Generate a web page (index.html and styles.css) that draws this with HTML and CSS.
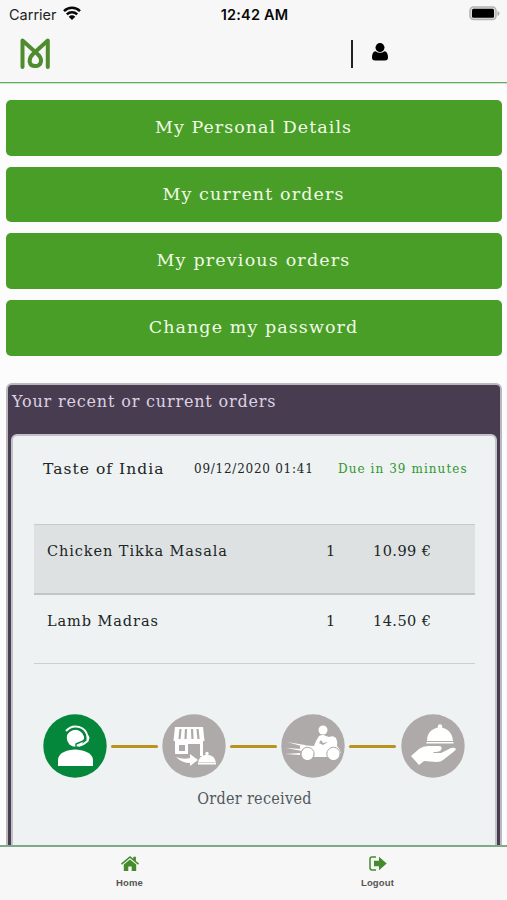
FILE: index.html
```html
<!DOCTYPE html>
<html lang="en">
<head>
<meta charset="utf-8">
<meta name="viewport" content="width=device-width, initial-scale=1">
<title>My account</title>
<link rel="stylesheet" href="styles.css">
</head>
<body>
<div class="app">
  <header class="top">
    <div class="status">
      <div class="carrier"><span>Carrier</span>
        <svg class="wifi" viewBox="0 0 18 14"><path d="M1 5.1a11.5 11.5 0 0 1 16 0M3.8 8.300a7.500 7.500 0 0 1 10.400 0" fill="none" stroke="#080808" stroke-width="2.500"/><path d="M9 14L5.700 10.700a4.700 4.700 0 0 1 6.600 0z" fill="#080808"/></svg>
      </div>
      <div class="clock">12:42 AM</div>
      <svg class="battery" viewBox="0 0 31 15"><rect x="1" y="1" width="26" height="12.5" rx="3.5" fill="#ddd" stroke="#b3b3b3" stroke-width="1.5"/><rect x="3" y="2.8" width="22" height="9" rx="1.5" fill="#000"/><path d="M28.5 5v5q2-.8 2-2.5t-2-2.5z" fill="#aaa"/></svg>
    </div>
    <div class="bar">
      <svg class="logo" viewBox="0 0 30 32"><path d="M2.500 29V2.500L17 15.500C23.500 21 21.500 28 15.200 28S7.500 21 13.500 15.500L27.800 2.500V29" fill="none" stroke="#4e8c2e" stroke-width="4" stroke-linecap="round" stroke-linejoin="round"/></svg>
      <i class="divider"></i>
      <svg class="user" viewBox="0 0 16 18"><circle cx="8" cy="4.600" r="4.500"/><path d="M3.500 8.200q4.500 3.100 9 0C15 8.500 16 11 16 14.500q0 3-3 3H3q-3 0-3-3C0 11 1 8.500 3.500 8.200z"/></svg>
    </div>
  </header>

  <main class="content">
    <nav class="actions">
      <a class="btn b1">My Personal Details</a>
      <a class="btn b2">My current orders</a>
      <a class="btn b3">My previous orders</a>
      <a class="btn b4">Change my password</a>
    </nav>

    <section class="panel">
      <h2><span>Your recent or current orders</span></h2>
      <article class="order">
        <div class="summary">
          <span class="place">Taste of India</span>
          <span class="date">09/12/2020 01:41</span>
          <span class="due">Due in 39 minutes</span>
        </div>
        <div class="items">
          <div class="item shaded"><span class="dish">Chicken Tikka Masala</span><span class="qty">1</span><span class="price">10.99 €</span></div>
          <div class="item"><span class="dish">Lamb Madras</span><span class="qty">1</span><span class="price">14.50 €</span></div>
        </div>
        <div class="steps">
          <svg class="step" viewBox="0 0 64 64"><circle cx="32" cy="32" r="31.700" fill="#04863b"/><g fill="#fff"><path d="M15 52V46C15 39 24 35.500 32 35.500S50 39 50 46v6z"/><circle cx="32.500" cy="24" r="8.700"/></g><path d="M23 17C30 9 43 12 44.500 23v4q-4 4-9 5" fill="none" stroke="#fff" stroke-width="2"/><path d="M44 20q5 4 0 8z" fill="#fff"/><path d="M24 19q9-8 16 0l2.500 5q-1 3-6 4.500L33 30v3" fill="none" stroke="#04863b" stroke-width="1.400"/></svg>
          <i class="link"></i>
          <svg class="step" viewBox="0 0 64 64"><circle cx="32" cy="32" r="31.700" fill="#aeaaa9"/><path d="M13 13h28l1.500 14h-31z" fill="#fff"/><path d="M18.500 15l-1 10M24 15l-.5 10M30 15l.5 10M35.500 15l1 10" stroke="#aeaaa9" stroke-width="2.200"/><path d="M13 27h28v15h-3V30H26v10H13zm4 4v6h6v-6z" fill="#fff" fill-rule="evenodd"/><path d="M14 43q7 3 14 1v-4l8 6-8 6v-3q-8 0-14-6zM36 50.500q0-9 9-10 9 1 9 10z" fill="#fff"/><circle cx="45" cy="39.500" r="1.700" fill="#fff"/><path d="M37 48.500h16" stroke="#ccc" stroke-width=".8"/></svg>
          <i class="link"></i>
          <svg class="step" viewBox="0 0 64 64"><circle cx="32" cy="32" r="31.700" fill="#aeaaa9"/><g fill="#fff"><circle cx="42" cy="16" r="4.500"/><path d="M35 27l3-5q4-2 7 0l3 1q4-2 7 1 2 4 1 8 3 3 4 7l-14 4H33q-1-8-8-8-4 0-6 2V31l14 1z"/><circle cx="26.500" cy="40" r="6.200"/><circle cx="52.500" cy="40" r="6.200"/><path d="M6 28l18 3v2zM5 34l16 1v2zM4 40l15-1v2z"/></g><path d="M40 26l2 3 5-1-5 3-4-2z" fill="#aeaaa9"/><g fill="none" stroke="#aeaaa9"><circle cx="26.500" cy="40" r="6.700"/><circle cx="52.500" cy="40" r="6.700"/></g></svg>
          <i class="link wide"></i>
          <svg class="step" viewBox="0 0 64 64"><circle cx="32" cy="32" r="31.700" fill="#aeaaa9"/><g fill="#fff"><path d="M26 27q0-12 13-14 12 2 13 14zM25.500 28h27v1.500h-27z"/><circle cx="39" cy="12.500" r="2.200"/><path d="M10 42l8-7q4-3 9-3h11q4 0 2 4-1 2-8 2l1 1h7l10-5q4-1 5 1-1 2-4 4l-9 7q-2 2-6 2l-13-1-5 4z"/></g></svg>
        </div>
        <p class="caption"><span>Order received</span></p>
      </article>
    </section>
  </main>

  <footer class="tabs">
    <a class="tab"><svg class="house" viewBox="0 0 18 15"><path d="M0 7.600L9 0l3.300 2.800V.8h2.600V5L18 7.600l-1 1.200L9 2 1 8.800zM2.800 8.500L9 3.400l6.200 5.100V15h-4.500v-4.500H7.300V15H2.800z"/></svg><span>Home</span></a>
    <a class="tab"><svg class="exit" viewBox="0 0 18 15"><path d="M7 1H3Q1 1 1 3v8.500q0 2.500 2 2.500h4" fill="none" stroke="#468a2e" stroke-width="1.500"/><path d="M5 4.700h5V.8l7.700 6.700L10 14.200v-4H5z"/></svg><span>Logout</span></a>
  </footer>
</div>
</body>
</html>
```
FILE: styles.css
```css
* { box-sizing: border-box; }
body { margin: 0; background: #fcfcfc; font-family: "DejaVu Serif", serif; color: #202525; }
svg { display: block; flex: none; }
.app { height: 900px; display: flex; flex-direction: column; overflow: hidden; }
.top { height: 83px; flex: none; background: #f7f7f7; border-bottom: 1px solid #5fae58; box-shadow: 0 1px 0 #cfe4cc; }
.status { height: 28px; padding: 0 7px 0 9px; display: grid; grid-template-columns: 1fr auto 1fr; align-items: center; font-family: Inter, sans-serif; font-size: 14.500px; color: #222; }
.carrier { display: flex; align-items: center; gap: 6px; }
.wifi { width: 18px; height: 14px; margin-top: -2px; }
.clock { font-weight: 600; color: #080808; font-size: 14.5px; letter-spacing: .2px; }
.battery { width: 31px; height: 15px; justify-self: end; margin-top: -1px; }
.bar { height: 54px; display: flex; padding-left: 20px; }
.logo { width: 30px; height: 32px; margin-top: 10px; }
.divider { width: 1.500px; height: 28px; background: #222; margin: 12px 0 0 301px; }
.user { width: 16px; height: 18px; margin: 15px 0 0 19px; }
.content { flex: 1; min-height: 0; overflow: hidden; padding: 17px 5px 0 6px; display: flex; flex-direction: column; }
.actions { display: grid; gap: 11px; }
.btn { height: 55.700px; border-radius: 5px; background: #489e27; color: #f0fae6; display: flex; align-items: center; justify-content: center; font-size: 17.500px; padding: 0 1px 2px 0; white-space: nowrap; }
.b1 { letter-spacing: 1.030px; }
.b2 { letter-spacing: 1.120px; }
.b3 { letter-spacing: 1.170px; }
.b4 { letter-spacing: 1.080px; }
.panel { flex: none; margin-top: 27.500px; border: 2px solid #bdb8c0; border-radius: 6px; background: #483d50; padding: 0 3px; height: 520px; }
h2 { margin: 0; height: 49px; padding: 6px 0 0 1px; font-size: 16px; line-height: 22px; font-weight: 400; letter-spacing: .83px; color: #ddd2e3; white-space: nowrap; }
.order { height: 500px; background: #eef2f3; border: 2px solid #c4c0c8; border-radius: 6px; padding: 0 20px 0 21px; }
.summary { height: 88px; display: flex; padding: 21px 0 0 9px; line-height: 24px; white-space: nowrap; }
.place { width: 151px; font-size: 15.500px; letter-spacing: 1.050px; }
.date { width: 144px; font-size: 12px; letter-spacing: .75px; }
.due { font-size: 12px; letter-spacing: 1.070px; color: #2e982e; }
.items { border-top: 1px solid #c5caca; }
.item { height: 69px; display: grid; grid-template-columns: 279px 47px 1fr; padding: 14px 0 0 13px; border-bottom: 1px solid #cbd0d1; font-size: 14.500px; line-height: 24px; letter-spacing: .92px; white-space: nowrap; }
.price { letter-spacing: .45px; }
.shaded { height: 70px; background: #dde1e2; border-bottom: 2px solid #c0c5c6; }
.steps { display: flex; align-items: center; padding-left: 9px; margin-top: 50px; }
.step { width: 64px; height: 64px; }
.link { width: 47px; height: 3px; border-radius: 2px; background: #ba9220; margin: 0 4px; }
.wide { margin-right: 5px; }
.caption { margin: 9px 0 0; font-family: "DejaVu Serif Condensed", "DejaVu Serif", serif; font-size: 16px; letter-spacing: .3px; line-height: 24px; text-align: center; color: #53585b; }
.tabs { height: 55px; flex: none; border-top: 2px solid #80a989; background: #f7f7f7; display: grid; grid-template-columns: 259px 1fr; }
.tab { display: flex; flex-direction: column; align-items: center; padding-top: 9px; font-family: "Liberation Sans", sans-serif; font-size: 9.500px; font-weight: 700; line-height: 12px; letter-spacing: .15px; color: #555; gap: 6px; }
.tab:last-child { padding-right: 0; margin-right: 11px; }
.tab svg { width: 18px; height: 15px; fill: #468a2e; }
```
